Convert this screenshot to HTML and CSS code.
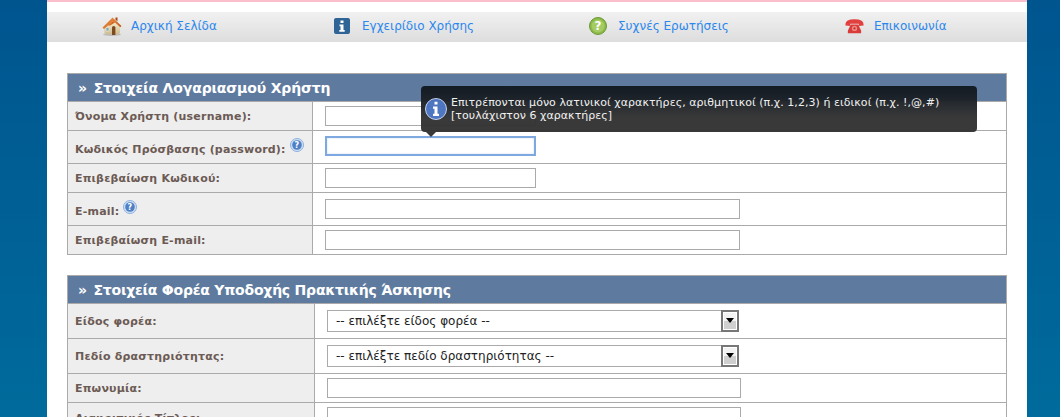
FILE: index.html
```html
<!DOCTYPE html>
<html lang="el">
<head>
<meta charset="utf-8">
<title>Εγγραφή</title>
<link rel="stylesheet" href="styles.css">
</head>
<body>
<div class="page">
  <div class="topline"></div>
  <nav class="nav">
    <a class="nav-item" href="#">
      <svg class="ic-home" viewBox="0 0 20 20">
        <defs>
          <linearGradient id="roof" x1="0" y1="0" x2="1" y2="1"><stop offset="0" stop-color="#f4a24e"/><stop offset="1" stop-color="#bc4a10"/></linearGradient>
          <linearGradient id="wall" x1="0" y1="0" x2="0" y2="1"><stop offset="0" stop-color="#fbf2d4"/><stop offset="1" stop-color="#cdbb8f"/></linearGradient>
        </defs>
        <ellipse cx="10" cy="18.500" rx="9" ry="1.500" fill="#bbb"/>
        <path d="M2.500 10.500 11 4l7 6v7.500q-7 2-15.500 0z" fill="url(#wall)"/>
        <path d="M10 19v-7.500q0-1.500 1.700-1.500t1.700 1.500V19z" fill="#7d4a20"/>
        <path d="M4 11.500h3v3.500H4z" fill="#7fa6c4" stroke="#f4ecd0" stroke-width=".6"/>
        <path d="M.5 11.500 10.500 1.500 19.500 10l-1.200 1.300L11.500 5 6 9.500 2 13z" fill="url(#roof)"/>
        <path d="M6 9.500 11.500 5 18.300 11.300 13 6.500 8 9.500z" fill="#d9621c"/>
        <path d="M13.500 1.500h2v4l-2-2z" fill="#a8481a"/>
      </svg>
      <span>Αρχική Σελίδα</span>
    </a>
    <a class="nav-item" href="#">
      <svg class="ic-info" viewBox="0 0 16 16"><rect width="16" height="16" rx="2" fill="#2f6496"/><path d="M6.500 2.500h3v2.500h-3zM5.500 6.500h4V12h1.200v1.800H5.300V12h1.200V8.200h-1z" fill="#fff"/></svg>
      <span>Εγχειρίδιο Χρήσης</span>
    </a>
    <a class="nav-item" href="#">
      <svg class="ic-q" viewBox="0 0 18 18"><circle cx="9" cy="9" r="8.500" fill="#8cb94a" stroke="#6d9a33"/><circle cx="9" cy="9" r="6.500" fill="#a4cc62"/><text x="9" y="13" class="ic-q-text">?</text></svg>
      <span>Συχνές Ερωτήσεις</span>
    </a>
    <a class="nav-item" href="#">
      <svg class="ic-phone" viewBox="0 0 20 16"><path d="M.5 6Q.5 1 10 1t9.500 5v1.500L14.500 8V5.500h-9V8L.5 7.500z" fill="#e2403f"/><path d="M6 6.500h8l3 6.500v2.500H3V13z" fill="#d93a3a"/><circle cx="10" cy="10.500" r="2.800" fill="#f08a80"/><circle cx="10" cy="10.500" r="1.200" fill="#c23030"/></svg>
      <span>Επικοινωνία</span>
    </a>
  </nav>

  <main class="content">
    <table class="form form-a">
      <colgroup><col class="col-a"><col></colgroup>
      <thead><tr><th colspan="2"><span class="raquo">»</span> Στοιχεία Λογαριασμού Χρήστη</th></tr></thead>
      <tbody>
        <tr class="h29"><td class="lbl">Όνομα Χρήστη (username):</td><td class="val"><input class="in in-s" type="text"></td></tr>
        <tr class="h33"><td class="lbl">Κωδικός Πρόσβασης (password): <svg class="help" viewBox="0 0 14 14"><circle cx="7" cy="7" r="6.500" fill="#cfe0f4" stroke="#8fb0dc"/><circle cx="7" cy="7" r="4.800" fill="#4f7fc4"/><text x="7" y="10" class="help-text">?</text></svg></td><td class="val"><input class="in in-s in-focus" type="text"></td></tr>
        <tr class="h29"><td class="lbl">Επιβεβαίωση Κωδικού:</td><td class="val"><input class="in in-s" type="text"></td></tr>
        <tr class="h33"><td class="lbl">E-mail: <svg class="help" viewBox="0 0 14 14"><circle cx="7" cy="7" r="6.500" fill="#cfe0f4" stroke="#8fb0dc"/><circle cx="7" cy="7" r="4.800" fill="#4f7fc4"/><text x="7" y="10" class="help-text">?</text></svg></td><td class="val"><input class="in in-l" type="text"></td></tr>
        <tr class="h29"><td class="lbl">Επιβεβαίωση E-mail:</td><td class="val"><input class="in in-l" type="text"></td></tr>
      </tbody>
    </table>

    <table class="form form-b">
      <colgroup><col class="col-b"><col></colgroup>
      <thead><tr><th colspan="2"><span class="raquo">»</span> Στοιχεία Φορέα Υποδοχής Πρακτικής Άσκησης</th></tr></thead>
      <tbody>
        <tr class="h35"><td class="lbl">Είδος φορέα:</td><td class="val"><div class="sel"><span class="sel-text">-- επιλέξτε είδος φορέα --</span><span class="sel-btn"><i></i></span></div></td></tr>
        <tr class="h35"><td class="lbl">Πεδίο δραστηριότητας:</td><td class="val"><div class="sel"><span class="sel-text">-- επιλέξτε πεδίο δραστηριότητας --</span><span class="sel-btn"><i></i></span></div></td></tr>
        <tr class="h29"><td class="lbl">Επωνυμία:</td><td class="val"><input class="in in-x" type="text"></td></tr>
        <tr class="h29"><td class="lbl lbl-last">Διακριτικός Τίτλος:</td><td class="val"><input class="in in-x" type="text"></td></tr>
      </tbody>
    </table>
  </main>

  <div class="tip">
    <svg class="tip-ic" viewBox="0 0 22 22"><circle cx="11" cy="11" r="10.500" fill="#4a72c0" stroke="#c3d2ee"/><path d="M9.500 3.800h3v2.800h-3zM8 8.500h4.500v7.300H14V18H8v-2.200h1.500v-5.100H8z" fill="#fff"/></svg>
    <p>Επιτρέπονται μόνο λατινικοί χαρακτήρες, αριθμητικοί (π.χ. 1,2,3) ή ειδικοί (π.χ. !,@,#)<br>[τουλάχιστον 6 χαρακτήρες]</p>
  </div>
</div>
</body>
</html>
```
FILE: styles.css
```css
html, body {
  margin: 0;
  height: 417px;
  overflow: hidden;
}
body {
  background: linear-gradient(#00558f 0, #006b9c 417px);
  font-family: "DejaVu Sans", Verdana, sans-serif;
}
.page {
  position: relative;
  width: 980px;
  height: 417px;
  margin-left: 47px;
  background: #fff;
  overflow: hidden;
}
.topline {
  height: 2px;
  background: #fbbfcb;
}
.nav {
  display: grid;
  grid-template-columns: 232px 255px 256px 1fr;
  align-items: center;
  box-sizing: border-box;
  height: 30px;
  margin-top: 10px;
  padding: 0 0 2px 55px;
  background: linear-gradient(#f1f1f1, #dddddd);
}
.nav-item {
  display: flex;
  align-items: center;
  font-size: 12px;
  color: #2b87ee;
  text-decoration: none;
}
.ic-home { width: 20px; height: 20px; margin-right: 9px; }
.ic-info { width: 16px; height: 16px; margin-right: 12px; }
.ic-q { width: 18px; height: 18px; margin-right: 11px; }
.ic-q-text {
  font: bold 12px "DejaVu Sans", sans-serif;
  fill: #fff;
  text-anchor: middle;
}
.ic-phone { width: 19px; height: 16px; margin-right: 10px; }
.content {
  padding: 31px 20px 0;
}
.form {
  width: 940px;
  table-layout: fixed;
  border-collapse: collapse;
  border: 1px solid #aaa;
}
.form-a { margin-bottom: 20px; }
.col-a { width: 245px; }
.col-b { width: 247px; }
.form th {
  box-sizing: border-box;
  height: 28px;
  padding: 0 0 0 10px;
  background: #5e7b9f;
  color: #fff;
  font-size: 14px;
  font-weight: bold;
  letter-spacing: -.15px;
  text-align: left;
  border: 1px solid #aaa;
}
.form-b th { letter-spacing: -.22px; }
.raquo { margin-right: 2px; }
.form td {
  box-sizing: border-box;
  padding: 0;
  border: 1px solid #aaa;
}
.h29 { height: 29px; }
.h33 { height: 33px; }
.h35 { height: 35px; }
.form .lbl {
  padding-left: 7px;
  background: #eeeeee;
  color: #6c5a54;
  font-size: 11px;
  font-weight: bold;
  letter-spacing: .2px;
}
.form .lbl-last { padding-top: 3px; }
.form .val { padding-left: 12px; }
.in {
  display: block;
  box-sizing: border-box;
  height: 20px;
  padding: 0 2px;
  background: #fff;
  border: 1px solid #aaa;
  outline: 0;
}
.in-s { width: 211px; }
.in-l { width: 415px; }
.in-x { width: 414px; }
.in-focus {
  margin-bottom: 2px;
  border: 2px solid #7ea9e0;
  box-shadow: inset 0 0 2px #c8d8ee;
}
.help {
  width: 14px;
  height: 14px;
  vertical-align: 1px;
}
.help-text {
  font: bold 8px "DejaVu Sans", sans-serif;
  fill: #fff;
  text-anchor: middle;
}
.sel {
  display: flex;
  align-items: stretch;
  box-sizing: border-box;
  width: 412px;
  height: 22px;
  background: #fff;
  border: 1px solid #aaa;
}
.sel-text {
  flex: 1;
  padding-left: 8px;
  font-size: 12px;
  line-height: 20px;
  color: #222;
}
.sel-btn {
  display: flex;
  justify-content: center;
  padding-top: 6px;
  box-sizing: border-box;
  width: 18px;
  margin: -1px -1px -1px 0;
  background: linear-gradient(#f2f2f2 50%, #cfcfcf 50%);
  border: 2px solid #777;
  box-shadow: inset 0 0 0 1px #fff;
}
.sel-btn i {
  width: 0;
  height: 0;
  border-left: 4px solid transparent;
  border-right: 4px solid transparent;
  border-top: 5px solid #000;
}
.tip {
  position: absolute;
  left: 374px;
  top: 86px;
  display: flex;
  align-items: center;
  box-sizing: border-box;
  width: 556px;
  height: 46px;
  padding: 0 4px;
  border-radius: 4px;
  background: linear-gradient(#111820 0, #1a2026 25%, #333333 70%);
  opacity: .97;
  color: #f2f2f2;
  font-size: 11px;
  line-height: 13px;
  letter-spacing: .05px;
}
.tip::after {
  content: "";
  position: absolute;
  left: 5px;
  top: 46px;
  border-left: 5px solid transparent;
  border-right: 5px solid transparent;
  border-top: 5px solid #333;
}
.tip-ic {
  flex: none;
  width: 22px;
  height: 22px;
  margin-right: 4px;
}
.tip p {
  margin: 0;
}
```
